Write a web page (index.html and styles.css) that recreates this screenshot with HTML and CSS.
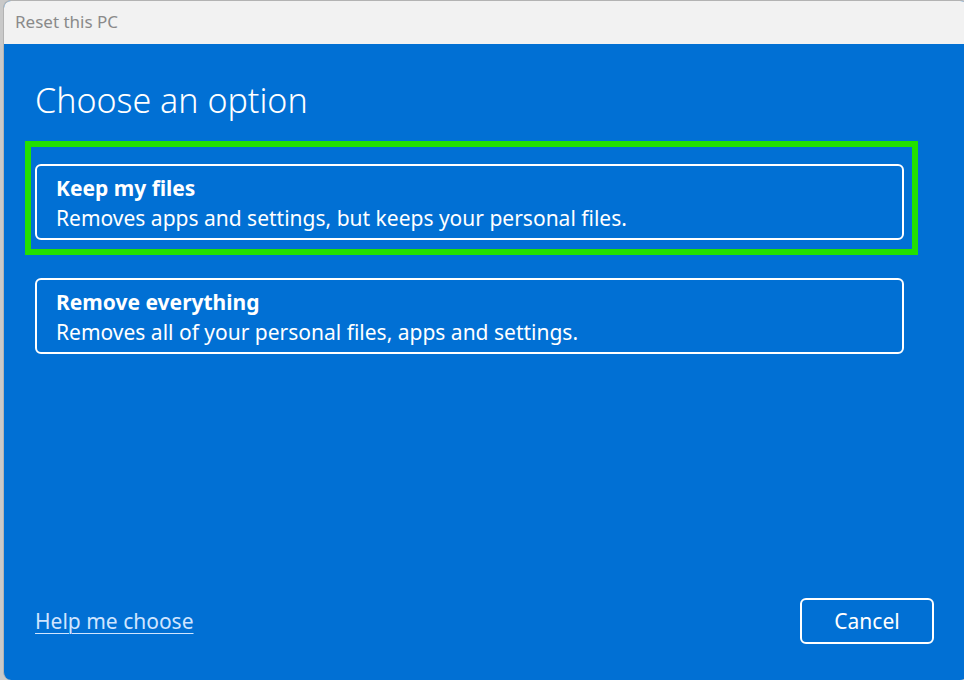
FILE: index.html
```html
<!DOCTYPE html>
<html lang="en">
  <head>
    <meta charset="UTF-8" />
    <title>Reset this PC</title>
    <link rel="stylesheet" href="styles.css">
  </head>
  <body>
    <div class="window">
      <div class="titlebar">Reset this PC</div>

      <div class="content">
        <h1>Choose an option</h1>

        <div class="options">
          <div class="option selected">
            <div class="option-title">Keep my files</div>
            <div class="option-desc">Removes apps and settings, but keeps your personal files.</div>
          </div>

          <div class="option">
            <div class="option-title">Remove everything</div>
            <div class="option-desc">Removes all of your personal files, apps and settings.</div>
          </div>
        </div>

        <div class="footer">
          <a href="#" class="help">Help me choose</a>
          <button class="btn">Cancel</button>
        </div>
      </div>
    </div>
  </body>
</html>
```

FILE: styles.css
```css
* {
  margin: 0;
  padding: 0;
  box-sizing: border-box;
}

body {
  font-family: "Noto Sans", "Open Sans", sans-serif;
  background: #c9c9c9;
  height: 680px;
  overflow: hidden;
  padding-left: 3px;
}

.window {
  width: 965px;
  height: 680px;
  border-top: 1px solid #b3b3b3;
  border-left: 1px solid #b3b3b3;
  border-radius: 8px;
  overflow: hidden;
  display: flex;
  flex-direction: column;
  background: #0170d4;
}

.titlebar {
  height: 43px;
  background: #f2f2f2;
  color: #8a8a8a;
  font-size: 17px;
  padding-left: 11px;
  line-height: 41px;
}

.content {
  flex: 1;
  display: flex;
  flex-direction: column;
  padding: 34px 64px 36px 31px;
  color: white;
}

h1 {
  font-size: 34px;
  font-weight: 300;
  line-height: 44px;
  margin-bottom: 42px;
}

.options {
  display: flex;
  flex-direction: column;
  gap: 38px;
}

.option {
  position: relative;
  border: 2px solid white;
  border-radius: 6px;
  height: 76px;
  padding: 7px 19px;
}

.option.selected::before {
  content: "";
  position: absolute;
  left: -12px;
  top: -25px;
  right: -16px;
  bottom: -17px;
  border: 6px solid #22e000;
}

.option-title {
  font-size: 21px;
  font-weight: 700;
  line-height: 30px;
}

.option-desc {
  font-size: 21px;
  line-height: 30px;
}

.footer {
  margin-top: auto;
  display: flex;
  align-items: center;
  justify-content: space-between;
  margin-right: -30px;
}

.help {
  color: #cfe5ff;
  font-size: 21px;
  text-underline-offset: 4px;
  text-decoration-thickness: 1px;
}

.btn {
  width: 134px;
  height: 46px;
  background: transparent;
  border: 2px solid white;
  border-radius: 6px;
  color: white;
  font-family: inherit;
  font-size: 21px;
}
```
